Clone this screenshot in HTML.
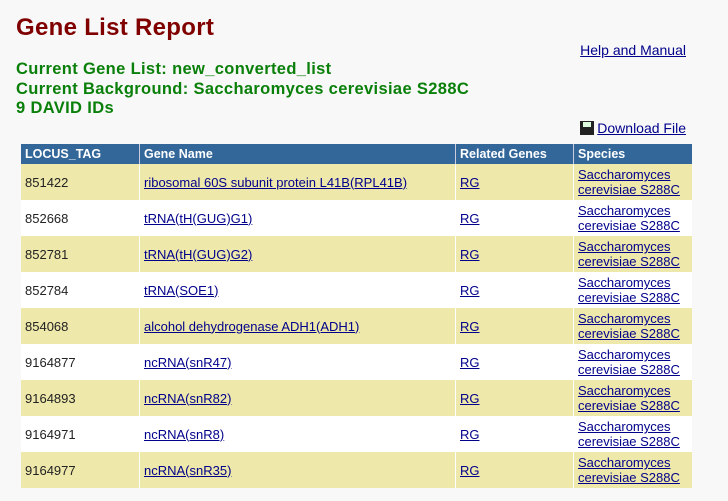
<!DOCTYPE html>
<html><head><style>
body{margin:0;background:#f8f8f8;font-family:"Liberation Sans",Tahoma,sans-serif;width:728px;height:501px;overflow:hidden;position:relative}
h1{position:absolute;left:16px;top:14px;margin:0;font-size:24px;color:#800000;font-weight:bold;letter-spacing:0.3px}
.help{position:absolute;right:42px;top:42px;font-size:14px;color:#00008b}
.g{position:absolute;left:16px;font-size:16.5px;font-weight:bold;color:#0a800a;letter-spacing:0.35px}
.dl{position:absolute;right:42px;top:120px;font-size:14px;color:#00008b}
.dl span.ic{display:inline-block;width:14px;height:14px;background:#222;vertical-align:-2px;margin-right:3px;position:relative}
.dl span.ic:after{content:"";position:absolute;left:3px;top:1px;width:8px;height:5px;background:#dfd}
table{position:absolute;left:21px;top:144px;border-collapse:collapse;font-size:13px;width:671px}
th{background:#336699;color:#fff;text-align:left;font-weight:bold;height:20px;padding:0 4px;border-left:1px solid #ccd;font-size:12.5px}
th:first-child{border-left:none}
td{height:36px;padding:0 4px;color:#222;border-left:1px solid #fff}
td:first-child{border-left:none}
tr.o td{background:#eee8aa}
tr.e td{background:#fff}
a{color:#00008b}
td.sp{line-height:15px}
</style></head><body>
<h1>Gene List Report</h1>
<a class="help" href="#">Help and Manual</a>
<div class="g" style="top:60px">Current Gene List: new_converted_list</div>
<div class="g" style="top:80px">Current Background: Saccharomyces cerevisiae S288C</div>
<div class="g" style="top:99px">9 DAVID IDs</div>
<div class="dl"><span class="ic"></span><a href="#">Download File</a></div>
<table>
<tr><th style="width:110px">LOCUS_TAG</th><th style="width:307px">Gene Name</th><th style="width:109px">Related Genes</th><th>Species</th></tr>
<tr class="o"><td>851422</td><td><a href="#">ribosomal 60S subunit protein L41B(RPL41B)</a></td><td><a href="#">RG</a></td><td class="sp"><a href="#">Saccharomyces cerevisiae S288C</a></td></tr>
<tr class="e"><td>852668</td><td><a href="#">tRNA(tH(GUG)G1)</a></td><td><a href="#">RG</a></td><td class="sp"><a href="#">Saccharomyces cerevisiae S288C</a></td></tr>
<tr class="o"><td>852781</td><td><a href="#">tRNA(tH(GUG)G2)</a></td><td><a href="#">RG</a></td><td class="sp"><a href="#">Saccharomyces cerevisiae S288C</a></td></tr>
<tr class="e"><td>852784</td><td><a href="#">tRNA(SOE1)</a></td><td><a href="#">RG</a></td><td class="sp"><a href="#">Saccharomyces cerevisiae S288C</a></td></tr>
<tr class="o"><td>854068</td><td><a href="#">alcohol dehydrogenase ADH1(ADH1)</a></td><td><a href="#">RG</a></td><td class="sp"><a href="#">Saccharomyces cerevisiae S288C</a></td></tr>
<tr class="e"><td>9164877</td><td><a href="#">ncRNA(snR47)</a></td><td><a href="#">RG</a></td><td class="sp"><a href="#">Saccharomyces cerevisiae S288C</a></td></tr>
<tr class="o"><td>9164893</td><td><a href="#">ncRNA(snR82)</a></td><td><a href="#">RG</a></td><td class="sp"><a href="#">Saccharomyces cerevisiae S288C</a></td></tr>
<tr class="e"><td>9164971</td><td><a href="#">ncRNA(snR8)</a></td><td><a href="#">RG</a></td><td class="sp"><a href="#">Saccharomyces cerevisiae S288C</a></td></tr>
<tr class="o"><td>9164977</td><td><a href="#">ncRNA(snR35)</a></td><td><a href="#">RG</a></td><td class="sp"><a href="#">Saccharomyces cerevisiae S288C</a></td></tr>
</table>
</body></html>
